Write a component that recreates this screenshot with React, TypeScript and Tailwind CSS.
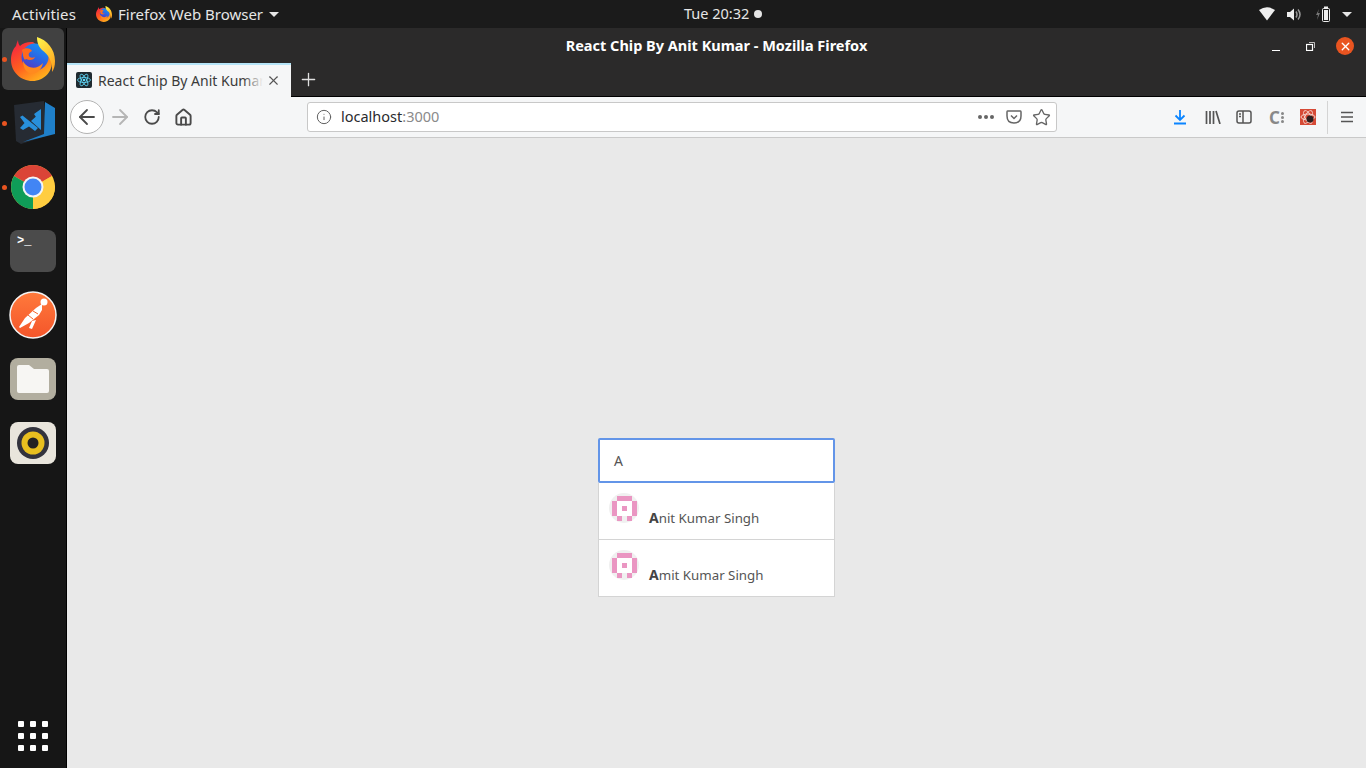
import { ArrowLeft, ArrowRight, House, Info, Plus, RotateCw, Star, X } from "lucide-react";

const uiFont = { fontFamily: '"Noto Sans", "Open Sans", sans-serif' };

function FirefoxLogo({ size, id }: { size: number; id: string }) {
  return (
    <svg width={size} height={size} viewBox="0 0 44 44">
      <defs>
        <linearGradient id={id + "a"} x1="0.1" y1="0.1" x2="0.7" y2="1">
          <stop offset="0" stopColor="#f5273f" />
          <stop offset="0.5" stopColor="#ff5f1f" />
          <stop offset="1" stopColor="#ffb31c" />
        </linearGradient>
        <linearGradient id={id + "b"} x1="0.8" y1="0" x2="0.3" y2="1">
          <stop offset="0" stopColor="#1496f5" />
          <stop offset="0.6" stopColor="#2f5fe0" />
          <stop offset="1" stopColor="#5a36c0" />
        </linearGradient>
        <linearGradient id={id + "c"} x1="0.2" y1="0" x2="0.7" y2="1">
          <stop offset="0" stopColor="#fff04a" />
          <stop offset="1" stopColor="#ffa51f" />
        </linearGradient>
      </defs>
      <path d="M7 3 C7 6 8 8 9 9 C12 6 17 4.500 22 5 L40 20 C44 34 33 44 21.500 44 C9.500 44 0 34.500 0 23 C0 17 2 12 5 9 C5.500 7 6 5 7 3Z" fill={`url(#${id}a)`} />
      <circle cx="24" cy="20" r="13.500" fill={`url(#${id}b)`} />
      <path d="M11 13 C14 10 20 11 21 14 C18 15 17 17 18 19 C19 21 22 21 24 20 C23 23 19 24 15 22 C13 25 12 18 11 13Z" fill="#ff6a1c" />
      <path d="M12 24 C16 32 26 33 32 26 C30 35 23 38 18 36 C14 34 12 29 12 24Z" fill="#ff8a1f" />
      <path d="M26 0 C36 3 44 12 44 24 C44 29 43 32 41 35 C42 25 37 17 31 13 C28 10 26 6 26 0Z" fill={`url(#${id}c)`} />
    </svg>
  );
}

function DockVsCode() {
  return (
    <svg width="44" height="48" viewBox="0 0 44 48">
      <path d="M3 6 L33 2 L35 37 L10 45 L5 42Z" fill="#262b33" />
      <path d="M34 3 L44 9 L44 35 L12 43 L33 35Z" fill="#1f7fc9" />
      <path d="M30 13 L30 31 L20 22Z M9 18 L11.500 16.500 L27 29 L24 32 L18 27.500 L12 31 L9 29 L13.500 24Z M23 15 L30 10 L30 13 L25 18Z" fill="#2890dc" />
    </svg>
  );
}

function DockChrome() {
  return (
    <svg width="44" height="44" viewBox="0 0 44 44">
      <circle cx="22" cy="22" r="22" fill="#ffcd40" />
      <path d="M22 22 L3 11 A22 22 0 0 1 41 11Z" fill="#db4437" />
      <path d="M22 22 L3 11 A22 22 0 0 0 22 44Z" fill="#0f9d58" />
      <path d="M22 22 L41 11 L44 22 A22 22 0 0 1 22 44Z" fill="#ffcd40" />
      <circle cx="22" cy="22" r="10.500" fill="#f5f5f5" />
      <circle cx="22" cy="22" r="8.500" fill="#4285f4" />
    </svg>
  );
}

function DockPostman() {
  return (
    <svg width="48" height="48" viewBox="0 0 48 48">
      <defs>
        <linearGradient id="pm" x1="0" y1="0" x2="0" y2="1">
          <stop offset="0" stopColor="#ff7a3c" />
          <stop offset="1" stopColor="#f4552a" />
        </linearGradient>
      </defs>
      <circle cx="24" cy="24" r="23" fill="url(#pm)" stroke="#f4f4f4" strokeWidth="1.500" />
      <circle cx="35" cy="11" r="3.500" fill="#fff" />
      <path d="M33 13 L27 17 L16 27 L10 36 L11 37 L20 32 L30 24 L33 19Z M23 30 L20 37 L23 38 L27 29Z" fill="#fff" />
      <path d="M19 24 L24 28 M24 20 L29 23" stroke="#f4662f" strokeWidth="1" />
    </svg>
  );
}

function DockFiles() {
  return (
    <div className="flex h-[42px] w-[46px] items-end justify-center rounded-lg bg-[#b2ae9f] pb-[7px]">
      <svg width="32" height="28" viewBox="0 0 32 28">
        <path d="M2 0 H12 L17 4 H30 Q32 4 32 6 V26 Q32 28 30 28 H2 Q0 28 0 26 V2 Q0 0 2 0Z" fill="#f7f6f3" />
      </svg>
    </div>
  );
}

function DockRhythmbox() {
  return (
    <div className="flex h-[42px] w-[46px] items-center justify-center rounded-lg bg-[#e9e5dc]">
      <svg width="32" height="32" viewBox="0 0 32 32">
        <circle cx="16" cy="16" r="16" fill="#33333d" />
        <circle cx="16" cy="16" r="11.500" fill="#e8bf1f" />
        <circle cx="16" cy="16" r="5.500" fill="#222" />
      </svg>
    </div>
  );
}

function DockItem({ active, running, children }: { active?: boolean; running?: boolean; children: React.ReactNode }) {
  return (
    <div className={`relative mx-[2px] flex h-[62px] w-[62px] items-center justify-center rounded-md ${active ? "bg-[#414141]" : ""}`}>
      {running && <span className="absolute left-0 top-[29px] h-[5px] w-[5px] rounded-full bg-[#e95420]" />}
      {children}
    </div>
  );
}

function Dock() {
  return (
    <aside className="flex w-[67px] shrink-0 flex-col border-r border-black bg-[#161616]">
      <div className="flex flex-col gap-[2px]">
        <DockItem active running><FirefoxLogo size={44} id="dock" /></DockItem>
        <DockItem running><DockVsCode /></DockItem>
        <DockItem running><DockChrome /></DockItem>
        <DockItem>
          <div className="flex h-[42px] w-[46px] items-start rounded-lg bg-[#4b4b4b] px-[7px] pt-[3px] font-['Liberation_Mono',monospace] text-[12px] font-bold leading-[16px] text-white">
            &gt;_
          </div>
        </DockItem>
        <DockItem><DockPostman /></DockItem>
        <DockItem><DockFiles /></DockItem>
        <DockItem><DockRhythmbox /></DockItem>
      </div>
      <div className="mt-auto mb-[17px] ml-[18px] grid w-[30px] grid-cols-3 gap-[6px]">
        {Array.from({ length: 9 }).map((_, i) => (
          <span key={i} className="h-[6px] w-[6px] rounded-[1px] bg-white" />
        ))}
      </div>
    </aside>
  );
}

function TopBar() {
  return (
    <header className="relative flex h-7 shrink-0 items-center justify-between bg-[#1b1b1b] text-[15px] text-[#e6e6e6]">
      <div className="flex items-center">
        <span className="ml-3 tracking-[0.150px]">Activities</span>
        <span className="ml-5 flex items-center gap-[6px]">
          <FirefoxLogo size={16} id="top" />
          Firefox Web Browser
          <span className="h-0 w-0 border-x-[5px] border-t-[5px] border-x-transparent border-t-[#e6e6e6]" />
        </span>
      </div>
      <div className="absolute left-[684px] flex items-center gap-[5px] text-[14.500px]">
        Tue 20:32
        <span className="h-2 w-2 rounded-full bg-[#e6e6e6]" />
      </div>
      <div className="mr-[14px] flex items-center">
        <svg width="16" height="14" viewBox="0 0 16 14"><path d="M0 3 Q8 -2.500 16 3 L8 13.500Z" fill="#eee" /></svg>
        <svg width="15" height="15" viewBox="0 0 15 15" className="ml-[12px]">
          <path d="M0 5 H3 L7 1.500 V13.500 L3 10 H0Z" fill="#eee" />
          <path d="M9 4.500 Q11 7.500 9 10.500 M11 2.500 Q15 7.500 11 12.500" stroke="#999" strokeWidth="1.500" fill="none" />
        </svg>
        <svg width="14" height="16" viewBox="0 0 14 16" className="ml-[14px]">
          <path d="M3 3 L0 9 H2 L1 14 L4 7 H2Z" fill="#777" />
          <rect x="6.500" y="2.500" width="7" height="13" rx="1" fill="none" stroke="#eee" />
          <rect x="8" y="4" width="4" height="10" fill="#eee" />
          <rect x="8" y="0.500" width="4" height="2" fill="#eee" />
        </svg>
        <span className="ml-[12px] h-0 w-0 border-x-[5px] border-t-[5px] border-x-transparent border-t-[#e6e6e6]" />
      </div>
    </header>
  );
}

function TitleBar() {
  return (
    <div className="relative flex h-[35px] shrink-0 items-center justify-center bg-[#2b2a2a] text-[14.500px] font-bold text-white">
      React Chip By Anit Kumar - Mozilla Firefox
      <div className="absolute right-[12px] top-[9px] flex items-center">
        <span className="mt-[8px] h-px w-2 bg-white" />
        <svg width="9" height="9" viewBox="0 0 9 9" fill="none" stroke="#fff" className="ml-[26px]">
          <rect x="0.500" y="2.500" width="6" height="6" strokeWidth="1.200" />
          <path d="M3 0.500 H8.500 V6" strokeWidth="0.700" />
        </svg>
        <span className="ml-[21px] flex h-[18px] w-[18px] items-center justify-center rounded-full bg-[#e95420]">
          <X size={13} color="#fff" strokeWidth={2.500} />
        </span>
      </div>
    </div>
  );
}

function TabBar() {
  return (
    <div className="flex h-[34px] shrink-0 bg-[#2b2a2a]">
      <div className="flex h-[34px] w-[224px] items-center border-t-2 border-[#b5e4f7] bg-[#f5f6f7] pb-[2px] pl-[9px] text-[14px] text-[#3b3b3b]">
        <svg width="16" height="16" viewBox="0 0 16 16" className="shrink-0">
          <rect width="16" height="16" rx="2" fill="#1f2a30" />
          <g fill="none" stroke="#61dafb" strokeWidth="0.800">
            <ellipse cx="8" cy="8" rx="6.500" ry="2.500" />
            <ellipse cx="8" cy="8" rx="6.500" ry="2.500" transform="rotate(60 8 8)" />
            <ellipse cx="8" cy="8" rx="6.500" ry="2.500" transform="rotate(120 8 8)" />
          </g>
          <circle cx="8" cy="8" r="1.300" fill="#61dafb" />
        </svg>
        <span className="relative ml-[6px] w-[165px] overflow-hidden whitespace-nowrap">
          React Chip By Anit Kumar
          <span className="absolute right-0 top-0 h-full w-5 bg-gradient-to-r from-transparent to-[#f5f6f7]" />
        </span>
        <X size={15} color="#555" strokeWidth={1.800} className="ml-[3px] shrink-0" />
      </div>
      <div className="flex flex-1 items-center border-b border-black">
        <span className="flex w-[34px] items-center justify-center">
          <Plus size={21} color="#e0e0e0" strokeWidth={1.500} />
        </span>
      </div>
    </div>
  );
}

function UrlBar() {
  return (
    <div className="ml-[114px] flex h-[30px] w-[750px] items-center rounded-[3px] border border-[#c8c8c8] bg-white pl-[8px] pr-[5px] text-[14.500px]">
      <Info size={16} color="#606060" strokeWidth={1.500} />
      <span className="ml-[9px] text-[#2a2a2e]">localhost<span className="text-[#8a8a8a]">:3000</span></span>
      <div className="ml-auto flex items-center">
        <span className="flex gap-[2px]">
          <span className="h-[4px] w-[4px] rounded-full bg-[#666]" />
          <span className="h-[4px] w-[4px] rounded-full bg-[#666]" />
          <span className="h-[4px] w-[4px] rounded-full bg-[#666]" />
        </span>
        <svg width="16" height="14" viewBox="0 0 16 14" fill="none" stroke="#666" strokeWidth="1.500" className="ml-[12px]">
          <path d="M1.500 1 H14.500 Q15 1 15 2 V6 Q15 13 8 13 Q1 13 1 6 V2 Q1 1 1.500 1Z" />
          <path d="M5 5.500 L8 8.500 L11 5.500" />
        </svg>
        <Star size={19} color="#666" strokeWidth={1.700} className="ml-[10px]" />
      </div>
    </div>
  );
}

function Toolbar() {
  return (
    <div className="flex h-[41px] shrink-0 items-center border-b border-[#c9c9c9] bg-[#f5f6f7]">
      <div className="ml-[3px] flex h-[34px] w-[34px] shrink-0 items-center justify-center rounded-full border border-[#b3b3b3] bg-white">
        <ArrowLeft size={24} color="#4a4a4a" strokeWidth={1.800} />
      </div>
      <ArrowRight size={24} color="#b5b5b5" strokeWidth={1.800} className="ml-[4px] shrink-0" />
      <RotateCw size={18} color="#4a4a4a" strokeWidth={2.400} className="ml-[11px] shrink-0" />
      <House size={19} color="#4a4a4a" strokeWidth={2.400} className="ml-[13px] shrink-0" />
      <UrlBar />
      <div className="ml-[116px] flex items-center">
        <svg width="14" height="16" viewBox="0 0 14 16" fill="none" stroke="#0a84ff" strokeWidth="1.800">
          <path d="M7 1 V11 M2.500 6.500 L7 11 L11.500 6.500 M1 14.500 H13" />
        </svg>
        <svg width="16" height="14" viewBox="0 0 16 14" fill="none" stroke="#555" strokeWidth="1.700" className="ml-[18px]">
          <path d="M1.500 1 V14 M5 1 V14 M8.500 1 V14 M11 1 L15 14" />
        </svg>
        <svg width="16" height="14" viewBox="0 0 16 14" fill="none" stroke="#555" strokeWidth="1.500" className="ml-[15px]">
          <rect x="1" y="1" width="14" height="12" rx="2" />
          <path d="M7 1 V13 M3 4 H5 M3 6.500 H5" />
        </svg>
        <span className="ml-[17px] flex items-center text-[17px] font-bold leading-none text-[#888]">
          C<span className="ml-[1px] flex flex-col gap-[1px]">
            <span className="h-[3px] w-[3px] rounded-full bg-[#888]" />
            <span className="h-[3px] w-[3px] rounded-full bg-[#888]" />
            <span className="h-[3px] w-[3px] rounded-full bg-[#888]" />
          </span>
        </span>
        <svg width="16" height="16" viewBox="0 0 16 16" className="ml-[16px]">
          <rect width="16" height="16" fill="#d64a36" />
          <g fill="none" stroke="#f5dcd6" strokeWidth="0.900">
            <ellipse cx="8" cy="8" rx="7" ry="3" />
            <ellipse cx="8" cy="8" rx="7" ry="3" transform="rotate(60 8 8)" />
            <ellipse cx="8" cy="8" rx="7" ry="3" transform="rotate(120 8 8)" />
          </g>
          <circle cx="10" cy="10" r="3.500" fill="#2b2020" />
        </svg>
        <span className="ml-[11px] h-[33px] w-px bg-[#d4d4d4]" />
        <svg width="14" height="12" viewBox="0 0 14 12" stroke="#555" strokeWidth="1.700" className="ml-[12px]">
          <path d="M1 1.500 H13 M1 6 H13 M1 10.500 H13" />
        </svg>
      </div>
    </div>
  );
}

function Identicon() {
  const cells = [
    [1, 0], [2, 0], [3, 0],
    [0, 1], [4, 1], [0, 2], [2, 2], [4, 2], [0, 3], [4, 3],
    [1, 4], [3, 4],
  ];
  return (
    <svg width="30" height="30" viewBox="0 0 30 30" className="shrink-0">
      <circle cx="15" cy="15" r="15" fill="#f0f0f0" />
      <rect x="8" y="8" width="15" height="15" fill="#ffffff" shapeRendering="crispEdges" />
      {cells.map(([c, r]) => (
        <rect key={`${c}-${r}`} x={3 + c * 5} y={3 + r * 5} width="5" height="5" fill="#ea96c2" shapeRendering="crispEdges" />
      ))}
    </svg>
  );
}

function ChipOption({ rest, last }: { rest: string; last?: boolean }) {
  return (
    <li className={`flex items-start bg-white pl-[10px] pt-[10px] text-[13.300px] text-[#555] ${last ? "h-[56px]" : "h-[57px] border-b border-[#d4d4d4]"}`}>
      <Identicon />
      <span className="ml-[10px] mt-[15px] leading-[19px]">
        <b className="text-[14px] text-[#444]">A</b>{rest}
      </span>
    </li>
  );
}

export default function App() {
  return (
    <div className="flex h-screen w-full flex-col overflow-hidden bg-[#e9e9e9]" style={uiFont}>
      <TopBar />
      <div className="flex min-h-0 flex-1">
        <Dock />
        <main className="flex min-w-0 flex-1 flex-col">
          <TitleBar />
          <TabBar />
          <Toolbar />
          <section className="flex flex-1 flex-col items-center pt-[300px]">
            <div className="w-[237px]">
              <div className="flex h-[45px] items-center rounded-[2px] border-2 border-[#6395e8] bg-white pl-[14px] text-[14px] text-[#555]">
                A
              </div>
              <ul className="border-x border-b border-[#d4d4d4]">
                <ChipOption rest="nit Kumar Singh" />
                <ChipOption rest="mit Kumar Singh" last />
              </ul>
            </div>
          </section>
        </main>
      </div>
    </div>
  );
}
